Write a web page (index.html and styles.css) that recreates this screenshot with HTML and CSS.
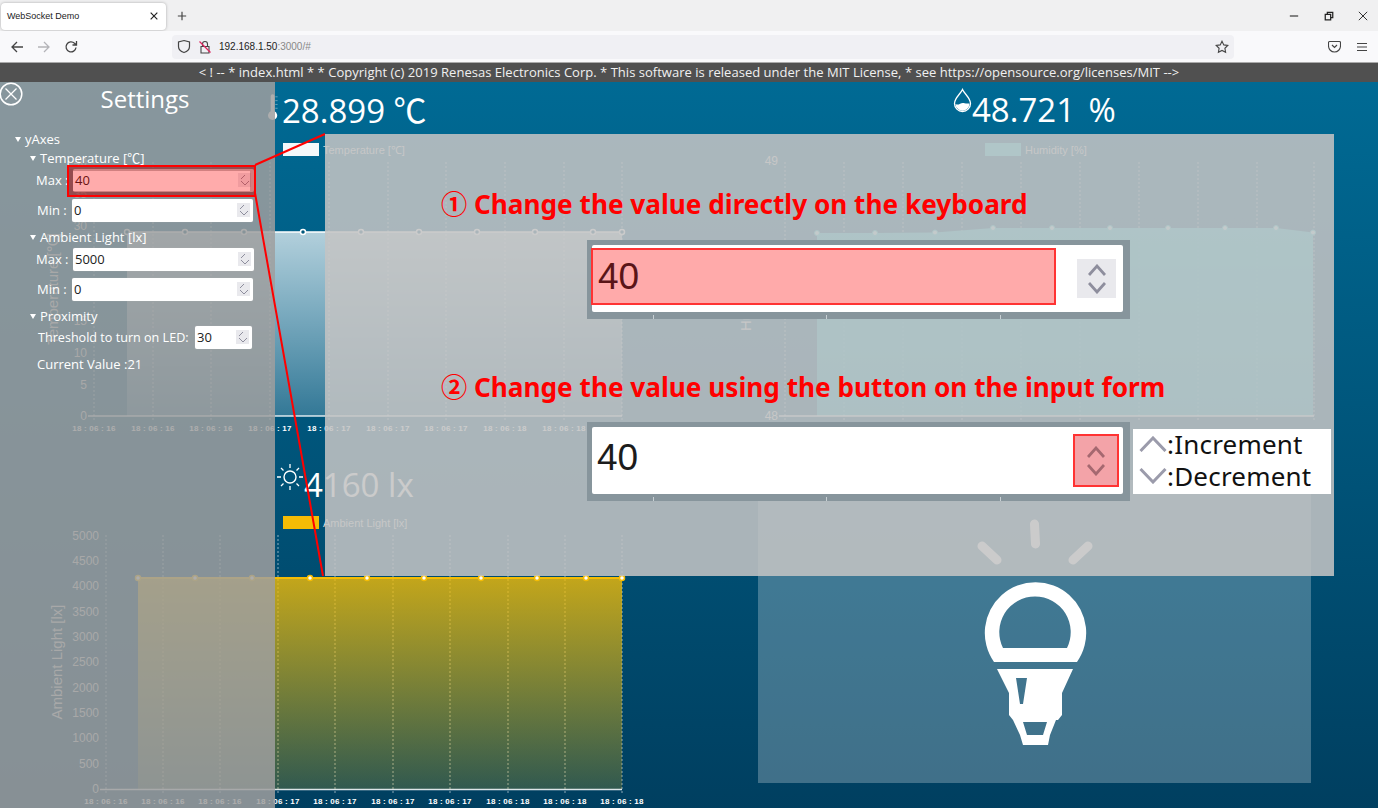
FILE: index.html
```html
<!DOCTYPE html>
<html lang="en">
<head>
  <meta charset="UTF-8">
  <meta name="viewport" content="width=device-width, initial-scale=1.0">
  <title>WebSocket Demo</title>
  <link rel="stylesheet" href="styles.css">
</head>
<body>
  <!-- Browser chrome -->
  <div class="tabbar">
    <div class="tab">
      <span class="tab-title">WebSocket Demo</span>
      <svg class="ico" width="10" height="10" viewBox="0 0 12 12"><path d="M2 2l8 8M10 2l-8 8" stroke="#222" stroke-width="1.400"/></svg>
    </div>
    <svg class="new-tab" width="10" height="10" viewBox="0 0 12 12"><path d="M6 1v10M1 6h10" stroke="#444" stroke-width="1.400"/></svg>
    <div class="win-controls">
      <svg width="10" height="10" viewBox="0 0 12 12"><path d="M1 6h10" stroke="#333" stroke-width="1.400"/></svg>
      <svg width="10" height="10" viewBox="0 0 12 12"><path d="M1.500 4h6.500v6.500h-6.500zM4 3.500v-2h6.500v6.500h-2.500" fill="none" stroke="#222" stroke-width="1.500"/></svg>
      <svg width="10" height="10" viewBox="0 0 12 12"><path d="M1 1l10 10M11 1l-10 10" stroke="#333" stroke-width="1.200"/></svg>
    </div>
  </div>
  <div class="toolbar">
    <div class="nav-buttons">
      <svg width="14" height="14" viewBox="0 0 14 14"><path d="M13 7H2M7 2L2 7l5 5" fill="none" stroke="#444" stroke-width="1.300"/></svg>
      <svg width="14" height="14" viewBox="0 0 14 14"><path d="M1 7h11M7 2l5 5-5 5" fill="none" stroke="#b4b4b8" stroke-width="1.300"/></svg>
      <svg width="14" height="14" viewBox="0 0 14 14"><path d="M12 7.500A5 5 0 1 1 10.500 3.300L12.500 5M12.500 1v4h-4" fill="none" stroke="#444" stroke-width="1.300"/></svg>
    </div>
    <div class="urlbar">
      <svg width="14" height="15" viewBox="0 0 14 15"><path d="M7 1.500l5.500 1.500v4.500c0 3-2.500 5-5.500 6-3-1-5.500-3-5.500-6V3z" fill="none" stroke="#444" stroke-width="1.200"/></svg>
      <svg class="lock" width="12" height="14" viewBox="0 0 12 14"><path d="M3.500 6V4a2.500 2.500 0 0 1 5 0v2M2 6.500h8v6.500H2z" fill="none" stroke="#444" stroke-width="1.100"/><path d="M0.500 1.500l11 11" stroke="#e0245e" stroke-width="1.300"/></svg>
      <span class="url">192.168.1.50<span class="url-port">:3000/#</span></span>
      <svg class="star" width="14" height="14" viewBox="0 0 14 14"><path d="M7 1.200l1.800 3.700 4 .6-2.900 2.800.7 4L7 10.400l-3.600 1.900.7-4L1.200 5.500l4-.6z" fill="none" stroke="#444" stroke-width="1.100"/></svg>
    </div>
    <div class="toolbar-right">
      <svg width="13" height="13" viewBox="0 0 13 13"><path d="M1.500 1.500h10a1 1 0 0 1 1 1v3.500a6 6 0 0 1-12 0V2.500a1 1 0 0 1 1-1z" fill="none" stroke="#444" stroke-width="1.100"/><path d="M4 5l2.500 2.500L9 5" fill="none" stroke="#444" stroke-width="1.200"/></svg>
      <svg width="12" height="10" viewBox="0 0 12 10"><path d="M1 1.500h10M1 5h10M1 8.500h10" stroke="#444" stroke-width="1.200"/></svg>
    </div>
  </div>

  <!-- Page -->
  <div class="banner">&lt; ! -- * index.html * * Copyright (c) 2019 Renesas Electronics Corp. * This software is released under the MIT License, * see https://opensource.org/licenses/MIT --&gt;</div>

  <div class="dashboard">
    <section class="panel panel-top">
      <div class="reading reading-temp">
        <svg class="thermo" width="14" height="29" viewBox="0 0 14 38"><path d="M4 4a2.500 2.500 0 0 1 5 0v20a6 6 0 1 1-5 0z" fill="#fff"/><path d="M10 5h3M10 10h3M10 15h3M10 20h3" stroke="#fff" stroke-opacity=".5"/></svg>
        <span>28.899 <span class="cjk">℃</span></span>
      </div>
      <div class="legend"><span class="swatch swatch-temp"></span>Temperature [℃]</div>
      <svg class="chart" width="689" height="280" viewBox="0 158 689 280">
        <defs>
          <linearGradient id="tempFill" x1="0" y1="0" x2="0" y2="1"><stop offset="0" stop-color="#fff" stop-opacity=".7"/><stop offset="1" stop-color="#fff" stop-opacity=".2"/></linearGradient>
        </defs>
        <path class="grid" d="M94 162V421M153 162V421M211 162V421M270 162V421M329 162V421M388 162V421M446 162V421M505 162V421M564 162V421M622 162V421"/>
        <path class="area" d="M127 232H622V416H127z" fill="url(#tempFill)"/>
        <path class="axis" d="M88 416H622"/>
        <path class="line-white" d="M127 232H622"/>
        <g class="dots-temp">
          <circle cx="127" cy="232" r="2.500"/><circle cx="185" cy="232" r="2.500"/><circle cx="244" cy="232" r="2.500"/><circle cx="303" cy="232" r="2.500"/><circle cx="361" cy="232" r="2.500"/><circle cx="419" cy="232" r="2.500"/><circle cx="477" cy="232" r="2.500"/><circle cx="535" cy="232" r="2.500"/><circle cx="593" cy="232" r="2.500"/><circle cx="622" cy="232" r="2.500"/>
        </g>
        <g class="ticks-y" text-anchor="end">
          <text x="87" y="166">40</text><text x="87" y="198">35</text><text x="87" y="230">30</text><text x="87" y="261">25</text><text x="87" y="293">20</text><text x="87" y="325">15</text><text x="87" y="357">10</text><text x="87" y="389">5</text><text x="87" y="420">0</text>
        </g>
        <text class="axis-title" transform="translate(58 289) rotate(-90)" text-anchor="middle">Temperature [℃]</text>
        <g class="ticks-x" text-anchor="middle">
          <text x="94" y="431">18 : 06 : 16</text><text x="153" y="431">18 : 06 : 16</text><text x="211" y="431">18 : 06 : 16</text><text x="270" y="431">18 : 06 : 17</text><text x="329" y="431">18 : 06 : 17</text><text x="388" y="431">18 : 06 : 17</text><text x="446" y="431">18 : 06 : 17</text><text x="505" y="431">18 : 06 : 18</text><text x="564" y="431">18 : 06 : 18</text><text x="622" y="431">18 : 06 : 18</text>
        </g>
      </svg>
    </section>

    <section class="panel panel-top">
      <div class="reading reading-hum">
        <svg class="drop" width="19" height="25" viewBox="0 0 19 25"><path d="M9.500 1.500C7.500 6 1.500 10 1.500 15.500a8 8 0 0 0 16 0C17.500 10 11.500 6 9.500 1.500z" fill="none" stroke="#fff" stroke-width="1.300"/><path d="M2.500 16c3 2 5-1.500 8-1 2 .3 4 .8 6 .5a7 7 0 0 1-14 .5z" fill="#fff"/></svg>
        <span>48.721 %</span>
      </div>
      <div class="legend legend-hum"><span class="swatch swatch-hum"></span>Humidity [%]</div>
      <svg class="chart" width="689" height="280" viewBox="689 158 689 280">
        <defs>
          <linearGradient id="humFill" x1="0" y1="0" x2="0" y2="1"><stop offset="0" stop-color="#28cfe0" stop-opacity=".95"/><stop offset="1" stop-color="#28cfe0" stop-opacity=".7"/></linearGradient>
        </defs>
        <path class="grid" d="M785 162V421M844 162V421M903 162V421M962 162V421M1021 162V421M1080 162V421M1139 162V421M1198 162V421M1257 162V421M1314 162V421"/>
        <path class="area" d="M817 233L875 233L935 232.500L993 228H1225L1276 228L1313 232.500V416H817z" fill="url(#humFill)"/>
        <path class="axis" d="M779 416H1314"/>
        <g class="dots-hum">
          <circle cx="817" cy="233" r="2.500"/><circle cx="875" cy="233" r="2.500"/><circle cx="935" cy="232.500" r="2.500"/><circle cx="993" cy="228" r="2.500"/><circle cx="1052" cy="228" r="2.500"/><circle cx="1110" cy="228" r="2.500"/><circle cx="1168" cy="228" r="2.500"/><circle cx="1225" cy="228" r="2.500"/><circle cx="1276" cy="228" r="2.500"/><circle cx="1313" cy="232.500" r="2.500"/>
        </g>
        <g class="ticks-y" text-anchor="end">
          <text x="778" y="165">49</text><text x="778" y="420">48</text>
        </g>
        <text class="axis-title" transform="translate(751 289) rotate(-90)" text-anchor="middle">Humidity [%]</text>
      </svg>
    </section>

    <section class="panel">
      <div class="reading reading-light">
        <svg class="sun" width="28" height="28" viewBox="0 0 28 28"><circle cx="14" cy="14" r="6" fill="none" stroke="#fff" stroke-width="1.400"/><path d="M14 1v4M14 23v4M1 14h4M23 14h4M5 5l2.500 2.500M20.500 20.500L23 23M5 23l2.500-2.500M20.500 7.500L23 5" stroke="#fff" stroke-width="1.300"/></svg>
        <span>4160 lx</span>
      </div>
      <div class="legend legend-light"><span class="swatch swatch-light"></span>Ambient Light [lx]</div>
      <svg class="chart" width="689" height="276" viewBox="0 532 689 276">
        <defs>
          <linearGradient id="lightFill" x1="0" y1="0" x2="0" y2="1"><stop offset="0" stop-color="#f4bc05" stop-opacity=".8"/><stop offset="1" stop-color="#f4bc05" stop-opacity=".2"/></linearGradient>
        </defs>
        <path class="grid" d="M106 535V794M163 535V794M220 535V794M278 535V794M335 535V794M393 535V794M450 535V794M508 535V794M565 535V794M622 535V794"/>
        <path class="area" d="M138 578H622V789.500H138z" fill="url(#lightFill)"/>
        <path class="axis" d="M100 789.500H622"/>
        <path class="line-yellow" d="M138 578H622"/>
        <g class="dots-light">
          <circle cx="138" cy="578" r="2.500"/><circle cx="195" cy="578" r="2.500"/><circle cx="252" cy="578" r="2.500"/><circle cx="310" cy="578" r="2.500"/><circle cx="367" cy="578" r="2.500"/><circle cx="424" cy="578" r="2.500"/><circle cx="481" cy="578" r="2.500"/><circle cx="537" cy="578" r="2.500"/><circle cx="586" cy="578" r="2.500"/><circle cx="622" cy="578" r="2.500"/>
        </g>
        <g class="ticks-y" text-anchor="end">
          <text x="99" y="540">5000</text><text x="99" y="565">4500</text><text x="99" y="590">4000</text><text x="99" y="616">3500</text><text x="99" y="641">3000</text><text x="99" y="666">2500</text><text x="99" y="692">2000</text><text x="99" y="717">1500</text><text x="99" y="742">1000</text><text x="99" y="768">500</text><text x="99" y="793">0</text>
        </g>
        <text class="axis-title" transform="translate(62 662) rotate(-90)" text-anchor="middle">Ambient Light [lx]</text>
        <g class="ticks-x" text-anchor="middle">
          <text x="106" y="804">18 : 06 : 16</text><text x="163" y="804">18 : 06 : 16</text><text x="220" y="804">18 : 06 : 16</text><text x="278" y="804">18 : 06 : 17</text><text x="335" y="804">18 : 06 : 17</text><text x="393" y="804">18 : 06 : 17</text><text x="450" y="804">18 : 06 : 17</text><text x="508" y="804">18 : 06 : 18</text><text x="565" y="804">18 : 06 : 18</text><text x="622" y="804">18 : 06 : 18</text>
        </g>
      </svg>
    </section>

    <section class="panel">
      <div class="led-box">
        <svg width="130" height="236" viewBox="970 515 130 236">
          <path d="M1034.500 524L1035.500 544M982 546L997 560M1088 546L1073 560" stroke="#fff" stroke-width="9" stroke-linecap="round"/>
          <path fill="#fff" fill-rule="evenodd" d="M994 662A50.700 50.700 0 1 1 1077 662ZM1003 648H1067A35.700 35.700 0 1 0 1003 648Z"/>
          <path fill="#fff" fill-rule="evenodd" d="M997 669H1073L1062 693V715L1058 720H1056L1050 735L1048 745H1023L1020 735L1013 720L1009 715V693ZM1016 678L1020 704H1023L1027 678ZM1023 722L1027 735H1043L1047 722Z"/>
        </svg>
      </div>
    </section>

    <!-- Settings drawer -->
    <aside class="settings">
      <svg class="close" width="24" height="24" viewBox="0 0 24 24"><circle cx="12" cy="12" r="10.800" fill="none" stroke="#fff" stroke-width="1.500"/><path d="M6.500 6.500l11 11M17.500 6.500l-11 11" stroke="#fff" stroke-width="1.300"/></svg>
      <h2 class="settings-title">Settings</h2>
      <div class="tree-head tree-top">yAxes</div>

      <div class="tree-head tree-first">Temperature [<span class="cjk">℃</span>]</div>
      <div class="field field-a"><label>Max :</label><div class="num"><span>40</span><span class="spin"></span></div></div>
      <div class="field"><label>Min :</label><div class="num"><span>0</span><span class="spin"></span></div></div>

      <div class="tree-head">Ambient Light [lx]</div>
      <div class="field field-a"><label>Max :</label><div class="num"><span>5000</span><span class="spin"></span></div></div>
      <div class="field"><label>Min :</label><div class="num"><span>0</span><span class="spin"></span></div></div>

      <div class="tree-head">Proximity</div>
      <div class="field field-led"><label>Threshold to turn on LED:</label><div class="num num-small"><span>30</span><span class="spin"></span></div></div>
      <div class="current">Current Value :21</div>
    </aside>

    <!-- Callout -->
    <div class="focus"></div>
    <svg class="leaders" width="80" height="450" viewBox="250 130 80 450"><path d="M255 165L325 134M255 193L323 576" stroke="#f00" stroke-width="2" fill="none"/></svg>

    <div class="callout">
      <h3 class="step">① Change the value directly on the keyboard</h3>
      <div class="shot">
        <div class="shot-field">
          <div class="shot-text shot-text-active">40</div>
          <div class="shot-spin"><svg width="18" height="30" viewBox="0 0 18 30"><path d="M1 11l8-9 8 9M1 19l8 9 8-9" fill="none" stroke="#8e8e9d" stroke-width="2.800"/></svg></div>
        </div>
      </div>
      <h3 class="step step-two">② Change the value using the button on the input form</h3>
      <div class="shot-row">
        <div class="shot">
          <div class="shot-field">
            <div class="shot-text">40</div>
            <div class="shot-spin shot-spin-active"><svg width="18" height="30" viewBox="0 0 18 30"><path d="M1 11l8-9 8 9M1 19l8 9 8-9" fill="none" stroke="#a56870" stroke-width="2.800"/></svg></div>
          </div>
        </div>
        <div class="keys">
          <div class="key"><svg width="28" height="16" viewBox="0 0 28 16"><path d="M1.500 15L14 2l12.500 13" fill="none" stroke="#9b9bab" stroke-width="3"/></svg>:Increment</div>
          <div class="key"><svg width="28" height="16" viewBox="0 0 28 16"><path d="M1.500 1L14 14 26.500 1" fill="none" stroke="#9b9bab" stroke-width="3"/></svg>:Decrement</div>
        </div>
      </div>
    </div>
  </div>
</body>
</html>
```

FILE: styles.css
```css
* {
  box-sizing: border-box;
}
html, body {
  margin: 0;
  height: 100%;
  overflow: hidden;
}
body {
  display: flex;
  flex-direction: column;
  width: 1378px;
  height: 808px;
  font-family: "Open Sans", "Noto Sans", sans-serif;
  color: #fff;
}
.cjk {
  font-family: "Noto Sans CJK JP", sans-serif;
}

/* browser chrome */
.tabbar {
  flex: none;
  height: 31px;
  display: flex;
  align-items: center;
  background: #f0f0f1;
  color: #222;
}
.tab {
  width: 165px;
  height: 27px;
  margin: 1px 0 0 1px;
  padding: 0 7px 0 6px;
  display: flex;
  align-items: center;
  justify-content: space-between;
  background: #fff;
  border-radius: 4px;
  box-shadow: 0 0 3px rgba(0, 0, 0, .3);
}
.tab-title {
  font-family: "Liberation Sans", sans-serif;
  font-size: 9px;
}
.new-tab {
  margin-left: 11px;
}
.win-controls {
  margin-left: auto;
  width: 79px;
  margin-right: 10px;
  display: flex;
  justify-content: space-between;
}
.toolbar {
  flex: none;
  height: 32px;
  display: flex;
  align-items: center;
  background: #f9f9fb;
  border-bottom: 1px solid #aaa;
}
.nav-buttons {
  width: 172px;
  padding: 0 94px 0 10px;
  display: flex;
  justify-content: space-between;
}
.urlbar {
  width: 1062px;
  height: 24px;
  padding: 0 5px;
  display: flex;
  align-items: center;
  background: #f0f0f4;
  border-radius: 4px;
}
.lock {
  margin-left: 8px;
}
.url {
  margin-left: 8px;
  font-family: "Liberation Sans", sans-serif;
  font-size: 10px;
  color: #222;
}
.url-port {
  color: #888;
}
.star {
  margin-left: auto;
}
.toolbar-right {
  flex: 1;
  padding: 0 10px 0 94px;
  display: flex;
  align-items: center;
  justify-content: space-between;
}

/* page */
.banner {
  flex: none;
  height: 19px;
  background: #505050;
  color: #f0f0f0;
  font-size: 13px;
  letter-spacing: .02px;
  line-height: 19px;
  text-align: center;
  white-space: nowrap;
}
.dashboard {
  position: relative;
  flex: 1;
  display: grid;
  grid-template-columns: 689px 689px;
  grid-template-rows: 376px 350px;
  background: linear-gradient(#006a94, #003f60);
  overflow: hidden;
}
.panel {
  display: flex;
  flex-direction: column;
}
.reading {
  height: 52px;
  display: flex;
  align-items: center;
  font-size: 33px;
  white-space: nowrap;
}
.reading-temp {
  padding: 2px 0 0 266px;
  margin-bottom: 9px;
}
.reading-temp .thermo {
  margin-top: -4px;
  margin-right: 2px;
}
.reading-hum {
  padding: 2px 0 0 264px;
  margin-bottom: 9px;
  word-spacing: 5px;
}
.reading-hum .drop {
  margin-top: -18px;
}
.reading-light {
  padding: 0 0 6px 276px;
  height: 58px;
}
.reading-light .sun {
  margin-top: -14px;
}
.legend {
  height: 13px;
  padding-left: 283px;
  display: flex;
  align-items: center;
  gap: 4px;
  font-family: "Liberation Sans", sans-serif;
  font-size: 11px;
  color: #ddd;
}
.legend-hum {
  padding-left: 296px;
}
.swatch {
  width: 36px;
  height: 13px;
}
.swatch-temp {
  background: #f4f8fa;
}
.swatch-hum {
  background: #2ed7e6;
}
.swatch-light {
  background: #f4bc05;
}
.chart {
  display: block;
  margin-top: 2px;
  overflow: visible;
  font-family: "Liberation Sans", sans-serif;
}
.panel .legend-light + .chart {
  margin-top: 3px;
}
.grid {
  fill: none;
  stroke: #fff;
  stroke-opacity: .55;
  stroke-dasharray: 2 2;
}
.axis {
  fill: none;
  stroke: #fff;
  stroke-opacity: .85;
  stroke-width: 1.500;
}
.line-white {
  fill: none;
  stroke: #fff;
  stroke-width: 1.500;
}
.line-yellow {
  fill: none;
  stroke: #f4bc05;
  stroke-width: 2;
}
.dots-temp circle {
  fill: #00587c;
  stroke: #fff;
  stroke-width: 1.500;
}
.dots-hum circle {
  fill: #c0f4fa;
  stroke: #28cfe0;
}
.dots-light circle {
  fill: #fff;
  stroke: #f4bc05;
  stroke-width: 1.500;
}
.ticks-y {
  font-size: 12px;
  fill: #ddd;
}
.ticks-x {
  font-size: 8px;
  font-weight: bold;
  letter-spacing: .2px;
  fill: #fff;
}
.axis-title {
  font-size: 15px;
  fill: #ddd;
}
.led-box {
  width: 553px;
  height: 303px;
  margin: 22px 0 0 69px;
  padding-top: 35px;
  display: flex;
  justify-content: center;
  background: rgba(255, 255, 255, .25);
}

/* settings drawer */
.settings {
  position: absolute;
  left: 0;
  top: 0;
  bottom: 0;
  width: 275px;
  background: rgba(159, 159, 159, .85);
  font-size: 13px;
}
.close {
  position: absolute;
  left: -1px;
  top: 0;
}
.settings-title {
  margin: 0;
  height: 36px;
  padding-left: 15px;
  font-size: 24px;
  font-weight: normal;
  line-height: 34px;
  text-align: center;
}
.tree-head {
  height: 20px;
  margin-top: 2px;
  padding-left: 40px;
  line-height: 20px;
  position: relative;
}
.tree-head::before {
  content: "";
  position: absolute;
  left: 30px;
  top: 8px;
  border: 3.500px solid transparent;
  border-top: 5px solid #fff;
  border-bottom: 0;
}
.tree-top {
  margin-top: 11px;
  padding-left: 25px;
}
.tree-top::before {
  left: 15px;
}
.tree-first {
  margin-top: -1px;
}
.field {
  height: 30px;
  padding-left: 37px;
  display: flex;
  align-items: center;
}
.field label {
  width: 35px;
  white-space: nowrap;
}
.field-a {
  margin-top: -3px;
  padding-left: 36px;
}
.field-a label {
  width: 37px;
}
.num {
  width: 181px;
  height: 23px;
  padding: 0 3px 0 2px;
  display: flex;
  align-items: center;
  justify-content: space-between;
  background: #fff;
  border-radius: 2px;
  color: #222;
  box-shadow: 0 0 1px #bbb;
}
.spin {
  width: 13px;
  height: 14px;
  background:
    linear-gradient(135deg, transparent 50%, #8e8e9d 50%, #8e8e9d 60%, transparent 60%) 3px 2px / 4px 4px no-repeat,
    linear-gradient(225deg, transparent 50%, #8e8e9d 50%, #8e8e9d 60%, transparent 60%) 7px 2px / 4px 4px no-repeat,
    linear-gradient(45deg, transparent 50%, #8e8e9d 50%, #8e8e9d 60%, transparent 60%) 3px 8px / 4px 4px no-repeat,
    linear-gradient(315deg, transparent 50%, #8e8e9d 50%, #8e8e9d 60%, transparent 60%) 7px 8px / 4px 4px no-repeat,
    #e9e9ed;
}
.field-led {
  padding-left: 38px;
  height: 24px;
  margin-top: -1px;
}
.field-led label {
  width: 157px;
  font-size: 12.600px;
}
.num-small {
  width: 57px;
}
.current {
  margin-top: 6px;
  padding-left: 37px;
}

/* callout */
.focus {
  position: absolute;
  left: 67px;
  top: 83px;
  width: 189px;
  height: 32px;
  border: 2px solid #f00;
  background: rgba(255, 0, 0, .33);
  box-shadow: inset 0 0 0 4px rgba(70, 0, 0, .25);
}
.leaders {
  position: absolute;
  left: 250px;
  top: 48px;
}
.callout {
  position: absolute;
  left: 325px;
  top: 52px;
  width: 1009px;
  height: 442px;
  padding: 52px 0 0 116px;
  background: rgba(195, 195, 195, .87);
}
.step {
  margin: 0;
  height: 36px;
  font-family: "Noto Sans", "Noto Sans CJK JP", sans-serif;
  font-size: 26.200px;
  font-weight: bold;
  line-height: 36px;
  color: #f00;
  white-space: nowrap;
}
.step-two {
  margin-top: 50px;
}
.shot {
  width: 543px;
  height: 79px;
  margin: 18px 0 0 146px;
  padding: 5px 7px 7px 5px;
  background:
    linear-gradient(#c8d0d4, #c8d0d4) 66px 100% / 1px 4px no-repeat,
    linear-gradient(#c8d0d4, #c8d0d4) 239px 100% / 1px 4px no-repeat,
    linear-gradient(#c8d0d4, #c8d0d4) 413px 100% / 1px 4px no-repeat,
    #87959c;
}
.shot-row {
  display: flex;
}
.shot-row .shot {
  margin-top: 17px;
}
.shot-field {
  position: relative;
  height: 67px;
  display: flex;
  align-items: center;
  justify-content: flex-end;
  padding-right: 7px;
  background: #fff;
  border-radius: 2px;
}
.shot-text {
  position: absolute;
  left: 5px;
  top: 10px;
  font-family: "Liberation Sans", sans-serif;
  font-size: 37px;
  color: #1c1c1c;
}
.shot-text-active {
  left: -1px;
  top: 3px;
  width: 465px;
  height: 57px;
  padding: 6px 0 0 5px;
  border: 2px solid #f33;
  background: #ffaaaa;
  color: #5a1518;
}
.shot-spin {
  width: 39px;
  height: 39px;
  display: flex;
  align-items: center;
  justify-content: center;
  background: #e9e9ed;
}
.shot-spin-active {
  width: 46px;
  height: 53px;
  margin-right: -3px;
  border: 2px solid #f33;
  background: #f3a3a8;
}
.keys {
  width: 198px;
  height: 65px;
  margin: 24px 0 0 3px;
  padding: 0 0 0 6px;
  background: #fff;
  color: #111;
  font-family: "Noto Sans", sans-serif;
  font-size: 26px;
  line-height: 32px;
  letter-spacing: .2px;
}
.key {
  display: flex;
  align-items: center;
  position: relative;
  top: -1px;
  white-space: nowrap;
}
```
